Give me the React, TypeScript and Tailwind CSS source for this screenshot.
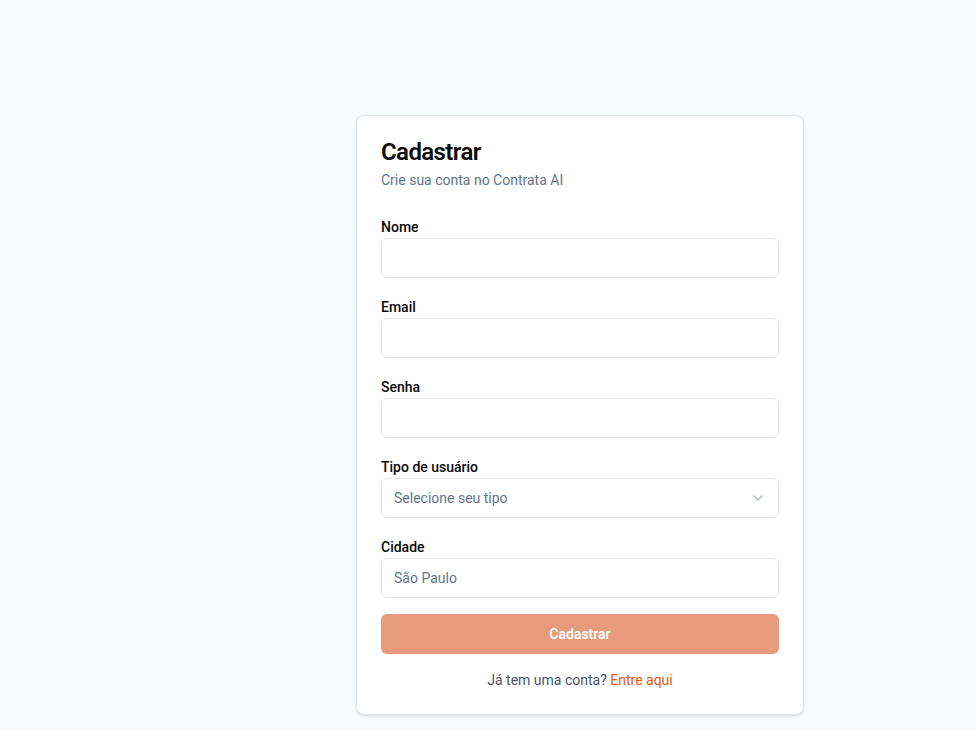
import { ChevronDown } from "lucide-react"

const fields = [
  { label: "Nome", placeholder: "", type: "text" },
  { label: "Email", placeholder: "", type: "email" },
  { label: "Senha", placeholder: "", type: "password" },
]

export default function App() {
  return (
    <div className="min-h-screen bg-[#f9fafb] pl-[356px] pt-[115px] font-['Roboto',sans-serif]">
      <div className="w-[448px] rounded-lg border border-[#e2e8f0] bg-white px-6 pt-6 pb-6 shadow-sm">
        <h1 className="text-2xl leading-none font-semibold tracking-tight text-[#0a0a0a]">Cadastrar</h1>
        <p className="mt-1.5 text-sm leading-5 text-[#64748b]">Crie sua conta no Contrata AI</p>

        <form className="mt-[27px] space-y-[19px]">
          {fields.map((f) => (
            <div key={f.label}>
              <label className="mb-px block text-sm leading-5 font-medium text-[#0a0a0a]">{f.label}</label>
              <input
                type={f.type}
                placeholder={f.placeholder}
                className="h-10 w-full rounded-md border border-[#e2e8f0] bg-white px-3 text-sm outline-none"
              />
            </div>
          ))}

          <div>
            <label className="mb-px block text-sm leading-5 font-medium text-[#0a0a0a]">Tipo de usuário</label>
            <button
              type="button"
              className="flex h-10 w-full items-center justify-between rounded-md border border-[#e2e8f0] bg-white px-3 text-sm text-[#64748b]"
            >
              <span>Selecione seu tipo</span>
              <ChevronDown className="h-4 w-4 opacity-50" />
            </button>
          </div>

          <div>
            <label className="mb-px block text-sm leading-5 font-medium text-[#0a0a0a]">Cidade</label>
            <input
              type="text"
              placeholder="São Paulo"
              className="h-10 w-full rounded-md border border-[#e2e8f0] bg-white px-3 text-sm outline-none placeholder:text-[#64748b]"
            />
          </div>
        </form>

        <button
          type="button"
          className="mt-4 h-10 w-full rounded-md bg-[#e89a7c] text-sm font-semibold text-white"
        >
          Cadastrar
        </button>

        <p className="mt-4 text-center text-sm leading-5 text-[#475569]">
          Já tem uma conta? <a className="text-[#ea580c]">Entre aqui</a>
        </p>
      </div>
    </div>
  )
}
